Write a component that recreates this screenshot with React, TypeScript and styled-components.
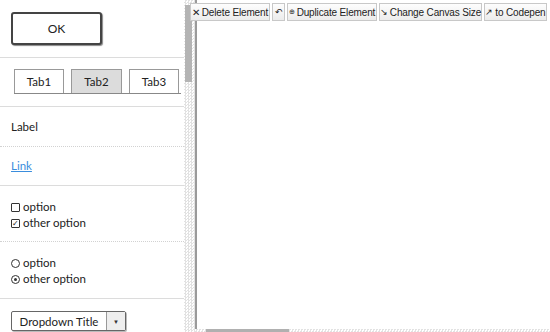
import React from "react"
import styled, { createGlobalStyle } from "styled-components"

const GlobalStyle = createGlobalStyle`
  html, body {
    margin: 0;
    padding: 0;
    background: #fff;
  }
  body {
    font-family: "Comic Sans MS", "Lato", sans-serif;
  }
`

const checker = `repeating-conic-gradient(#e2e2e2 0 25%, #fff 0 50%) 0 0 / 3px 3px`

const Page = styled.div`
  display: flex;
  width: 550px;
  height: 332px;
  overflow: hidden;
  position: relative;
`

const Sidebar = styled.div`
  width: 184px;
  flex: none;
  display: flex;
  flex-direction: column;
  overflow: hidden;
`

const Section = styled.div<{ $pt: number; $h: number; $dotted?: boolean }>`
  height: ${(p) => p.$h}px;
  box-sizing: border-box;
  padding: ${(p) => p.$pt}px 0 0 11px;
  border-bottom: 1px ${(p) => (p.$dotted ? "dotted #d2d2d2" : "solid #dcdcdc")};
  flex: none;
  display: flex;
  flex-direction: column;
  font-size: 11.5px;
  color: #222;
`

const OkButton = styled.button`
  width: 91px;
  height: 33px;
  box-sizing: border-box;
  border: 2px solid #444;
  border-radius: 3px;
  background: #fff;
  box-shadow: 1px 1px 1px #888;
  font-family: inherit;
  font-size: 12px;
  color: #222;
  padding: 0;
`

const TabRow = styled.div`
  display: flex;
  gap: 7px;
  margin-left: 3px;
  width: 167px;
  border-bottom: 1px solid #888;
`

const Tab = styled.div<{ $active?: boolean }>`
  height: 24px;
  box-sizing: border-box;
  padding: 0;
  border: 1px solid #999;
  border-bottom: none;
  background: ${(p) => (p.$active ? "#dcdcdc" : "#fff")};
  display: flex;
  align-items: center;
  justify-content: center;
  font-size: 11.5px;
  width: ${(p) => (p.$active ? 51 : 50)}px;
`

const Line = styled.div`
  height: 16px;
  line-height: 16px;
  display: flex;
  align-items: center;
  gap: 3px;
`

const LinkText = styled.a`
  color: #3a8ddd;
  text-decoration: underline;
  font-size: 11.5px;
`

const Box = styled.span<{ $round?: boolean }>`
  width: 7px;
  height: 7px;
  border: 1px solid #333;
  border-radius: ${(p) => (p.$round ? "50%" : "1px")};
  display: inline-flex;
  align-items: center;
  justify-content: center;
  font-size: 8px;
  line-height: 1;
  flex: none;
`

const Dot = styled.span`
  width: 3px;
  height: 3px;
  border-radius: 50%;
  background: #333;
`

const Dropdown = styled.div`
  display: flex;
  width: 115px;
  height: 20px;
  box-sizing: border-box;
  border: 1px solid #666;
  border-radius: 2px;
  background: #fff;
  box-shadow: 1px 1px 0 #bbb;
`

const DropLabel = styled.div`
  flex: 1;
  display: flex;
  align-items: center;
  justify-content: center;
  font-size: 11.5px;
`

const DropArrow = styled.div`
  width: 18px;
  border-left: 1px solid #999;
  background: #eee;
  display: flex;
  align-items: center;
  justify-content: center;
  font-size: 6px;
  color: #333;
`

const ScrollTrack = styled.div`
  width: 11px;
  flex: none;
  background: ${checker};
  padding-top: 5px;
  box-sizing: border-box;
`

const ScrollThumb = styled.div`
  width: 7px;
  margin-left: 1px;
  height: 77px;
  background: #b4b4b4;
`

const CanvasWrap = styled.div`
  flex: 1;
  display: flex;
  flex-direction: column;
`

const Canvas = styled.div`
  flex: 1;
  border-left: 2px solid #9a9a9a;
  background: #fff;
`

const HScroll = styled.div`
  height: 3px;
  flex: none;
  background: ${checker};
  padding-left: 11px;
`

const HThumb = styled.div`
  width: 83px;
  height: 3px;
  background: #b0b0b0;
`

const Toolbar = styled.div`
  position: absolute;
  top: 3px;
  left: 190px;
  display: flex;
  gap: 2px;
`

const ToolButton = styled.button<{ $w: number }>`
  width: ${(p) => p.$w}px;
  height: 18px;
  box-sizing: border-box;
  padding: 0;
  border: 1px solid #c8c8c8;
  background: linear-gradient(#fdfdfd, #ececec);
  font-family: "Liberation Sans", Arial, sans-serif;
  font-size: 10px;
  letter-spacing: -0.15px;
  color: #222;
  display: flex;
  align-items: center;
  justify-content: center;
  gap: 2px;
  white-space: nowrap;
`

const Glyph = styled.span<{ $size?: number }>`
  font-size: ${(p) => p.$size ?? 10}px;
`

export default function App() {
  return (
    <>
      <GlobalStyle />
      <Page>
        <Sidebar>
          <Section $pt={12} $h={58}>
            <OkButton>OK</OkButton>
          </Section>
          <Section $pt={11} $h={49}>
            <TabRow>
              <Tab>Tab1</Tab>
              <Tab $active>Tab2</Tab>
              <Tab>Tab3</Tab>
            </TabRow>
          </Section>
          <Section $pt={12} $h={40} $dotted>
            <Line>Label</Line>
          </Section>
          <Section $pt={11} $h={39}>
            <Line>
              <LinkText href="#">Link</LinkText>
            </Line>
          </Section>
          <Section $pt={13} $h={56} $dotted>
            <Line>
              <Box /> option
            </Line>
            <Line>
              <Box>✓</Box> other option
            </Line>
          </Section>
          <Section $pt={13} $h={57}>
            <Line>
              <Box $round /> option
            </Line>
            <Line>
              <Box $round>
                <Dot />
              </Box>{" "}
              other option
            </Line>
          </Section>
          <Section $pt={12} $h={40}>
            <Dropdown>
              <DropLabel>Dropdown Title</DropLabel>
              <DropArrow>▼</DropArrow>
            </Dropdown>
          </Section>
        </Sidebar>
        <ScrollTrack>
          <ScrollThumb />
        </ScrollTrack>
        <CanvasWrap>
          <Canvas />
          <HScroll>
            <HThumb />
          </HScroll>
        </CanvasWrap>
        <Toolbar>
          <ToolButton $w={80}>
            <Glyph $size={10}>✕</Glyph>Delete Element
          </ToolButton>
          <ToolButton $w={13}>
            <Glyph $size={9}>↶</Glyph>
          </ToolButton>
          <ToolButton $w={90}>
            <Glyph $size={7}>⊕</Glyph>Duplicate Element
          </ToolButton>
          <ToolButton $w={103}>
            <Glyph $size={9}>↘</Glyph>Change Canvas Size
          </ToolButton>
          <ToolButton $w={63}>
            <Glyph $size={9}>↗</Glyph>to Codepen
          </ToolButton>
        </Toolbar>
      </Page>
    </>
  )
}
